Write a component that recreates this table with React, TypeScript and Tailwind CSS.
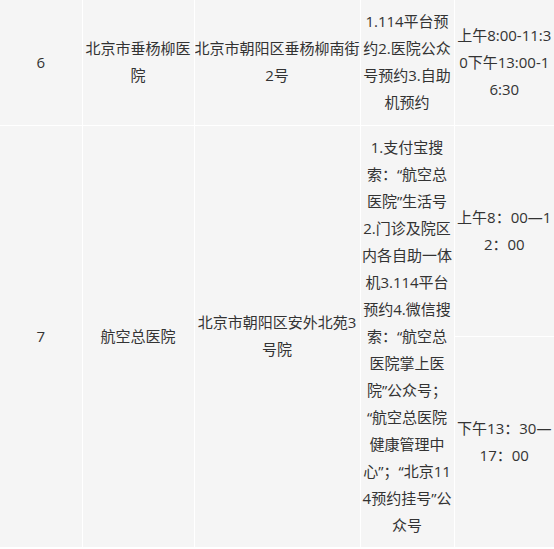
import React from 'react';

const Lines = ({ lines }: { lines: string[] }) => (
  <>
    {lines.map((l, i) => (
      <span key={i} className="block whitespace-nowrap">{l}</span>
    ))}
  </>
);

const cell = "border border-white px-0 py-2 align-middle overflow-hidden";

export default function App() {
  return (
    <div className="w-[554px] h-[549px] overflow-hidden bg-white">
      <table
        className="table-fixed border-collapse w-[554px] bg-[#f5f5f5] text-[#333] text-[15px] leading-[27px] text-center"
        style={{ fontFamily: '"Open Sans", "Noto Sans CJK SC", sans-serif' }}
      >
        <colgroup>
          <col className="w-[82px]" />
          <col className="w-[112px]" />
          <col className="w-[166px]" />
          <col className="w-[94px]" />
          <col className="w-[100px]" />
        </colgroup>
        <tbody>
          <tr className="h-[125px]">
            <td className={`${cell} border-t-0 border-l-0`}>6</td>
            <td className={`${cell} border-t-0`}><Lines lines={["北京市垂杨柳医", "院"]} /></td>
            <td className={`${cell} border-t-0`}><Lines lines={["北京市朝阳区垂杨柳南街", "2号"]} /></td>
            <td className={`${cell} border-t-0`}><Lines lines={["1.114平台预", "约2.医院公众", "号预约3.自助", "机预约"]} /></td>
            <td className={`${cell} border-t-0 border-r-0`}><Lines lines={["上午8:00-11:3", "0下午13:00-1", "6:30"]} /></td>
          </tr>
          <tr>
            <td rowSpan={2} className={`${cell} border-l-0`}>7</td>
            <td rowSpan={2} className={cell}>航空总医院</td>
            <td rowSpan={2} className={cell}><Lines lines={["北京市朝阳区安外北苑3", "号院"]} /></td>
            <td rowSpan={2} className={cell}>
              <Lines
                lines={[
                  "1.支付宝搜",
                  "索：“航空总",
                  "医院”生活号",
                  "2.门诊及院区",
                  "内各自助一体",
                  "机3.114平台",
                  "预约4.微信搜",
                  "索：“航空总",
                  "医院掌上医",
                  "院”公众号；",
                  "“航空总医院",
                  "健康管理中",
                  "心”；“北京11",
                  "4预约挂号”公",
                  "众号",
                ]}
              />
            </td>
            <td className={`${cell} border-r-0`}><Lines lines={["上午8：00—1", "2：00"]} /></td>
          </tr>
          <tr>
            <td className={`${cell} border-r-0`}><Lines lines={["下午13：30—", "17：00"]} /></td>
          </tr>
        </tbody>
      </table>
    </div>
  );
}
